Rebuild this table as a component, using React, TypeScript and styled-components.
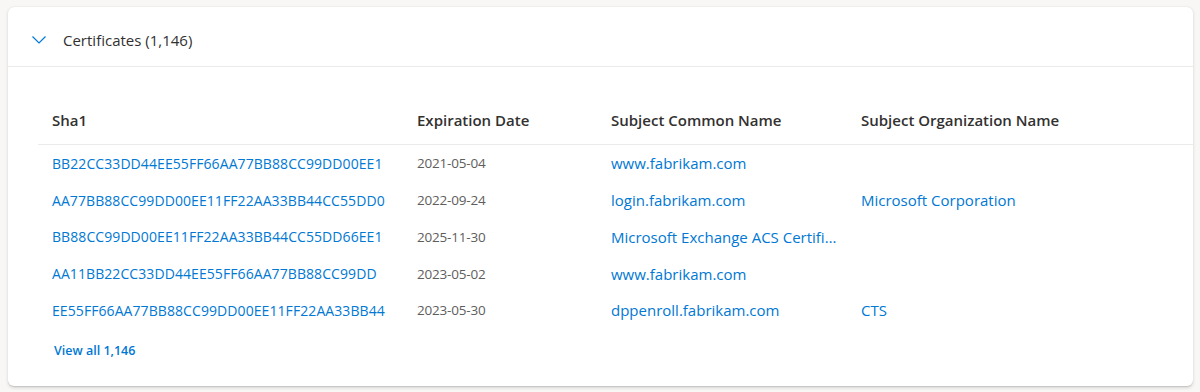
import styled, { createGlobalStyle } from 'styled-components';

const GlobalStyle = createGlobalStyle`
  html, body {
    margin: 0;
    padding: 0;
    background: #f8f7f6;
    font-family: "Open Sans", "Noto Sans", sans-serif;
  }
`;

const Page = styled.div`
  padding: 7px 7px 6px 8px;
`;

const Card = styled.section`
  background: #ffffff;
  border-radius: 6px;
  box-shadow: 0 1.6px 3.6px rgba(0, 0, 0, 0.13), 0 0.3px 0.9px rgba(0, 0, 0, 0.11);
  height: 379px;
  box-sizing: border-box;
`;

const Header = styled.button`
  display: flex;
  align-items: center;
  gap: 16px;
  width: 100%;
  height: 60px;
  padding: 6px 0 0 23px;
  border: none;
  border-bottom: 1px solid #edebe9;
  background: transparent;
  font-family: inherit;
  font-size: 15px;
  color: #323130;
  text-align: left;
  cursor: pointer;
`;

const Body = styled.div`
  padding: 36px 0 0 30px;
`;

const Row = styled.div<{ $head?: boolean }>`
  display: grid;
  grid-template-columns: 365px 194px 250px 1fr;
  align-items: center;
  box-sizing: border-box;
  height: ${p => (p.$head ? '42px' : '36.75px')};
  padding-bottom: ${p => (p.$head ? '8px' : '0')};
  border-bottom: ${p => (p.$head ? '1px solid #edebe9' : 'none')};
`;

type Kind = 'head' | 'hash' | 'link' | 'date';

const sizes: Record<Kind, string> = {
  head: '15px',
  hash: '14px',
  link: '15px',
  date: '13.5px',
};

const spacing: Record<Kind, string> = {
  head: '0',
  hash: '0.08px',
  link: '0',
  date: '-0.2px',
};

const Cell = styled.div<{ $kind: Kind }>`
  padding: 0 6px 0 14px;
  font-size: ${p => sizes[p.$kind]};
  letter-spacing: ${p => spacing[p.$kind]};
  white-space: nowrap;
  overflow: hidden;
  text-overflow: ellipsis;
  font-weight: ${p => (p.$kind === 'head' ? 600 : 400)};
  color: ${p =>
    p.$kind === 'head' ? '#323130' : p.$kind === 'date' ? '#605e5c' : '#0078d4'};
`;

const ViewAll = styled.a`
  display: inline-block;
  margin: 13px 0 0 16px;
  font-size: 12.5px;
  font-weight: 600;
  color: #0078d4;
  text-decoration: none;
`;

const rows = [
  ['BB22CC33DD44EE55FF66AA77BB88CC99DD00EE1', '2021-05-04', 'www.fabrikam.com', ''],
  ['AA77BB88CC99DD00EE11FF22AA33BB44CC55DD0', '2022-09-24', 'login.fabrikam.com', 'Microsoft Corporation'],
  ['BB88CC99DD00EE11FF22AA33BB44CC55DD66EE1', '2025-11-30', 'Microsoft Exchange ACS Certificate', ''],
  ['AA11BB22CC33DD44EE55FF66AA77BB88CC99DD', '2023-05-02', 'www.fabrikam.com', ''],
  ['EE55FF66AA77BB88CC99DD00EE11FF22AA33BB44', '2023-05-30', 'dppenroll.fabrikam.com', 'CTS'],
];

const Chevron = () => (
  <svg width="16" height="16" viewBox="0 0 16 16" fill="none">
    <path d="M1.5 4.5 L8 11 L14.5 4.5" stroke="#0078d4" strokeWidth="1.2" />
  </svg>
);

export default function App() {
  return (
    <Page>
      <GlobalStyle />
      <Card>
        <Header>
          <Chevron />
          <span>Certificates (1,146)</span>
        </Header>
        <Body>
          <Row $head>
            <Cell $kind="head">Sha1</Cell>
            <Cell $kind="head">Expiration Date</Cell>
            <Cell $kind="head">Subject Common Name</Cell>
            <Cell $kind="head">Subject Organization Name</Cell>
          </Row>
          {rows.map(r => (
            <Row key={r[0]}>
              <Cell $kind="hash">{r[0]}</Cell>
              <Cell $kind="date">{r[1]}</Cell>
              <Cell $kind="link" title={r[2]}>{r[2]}</Cell>
              <Cell $kind="link">{r[3]}</Cell>
            </Row>
          ))}
          <ViewAll href="#">View all 1,146</ViewAll>
        </Body>
      </Card>
    </Page>
  );
}
